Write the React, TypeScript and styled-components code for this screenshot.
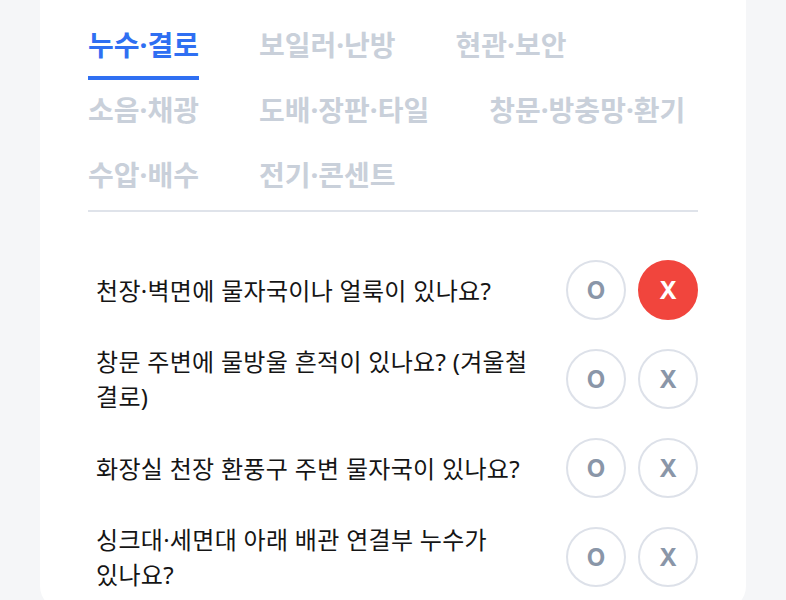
import React, { useState } from "react";
import styled, { createGlobalStyle } from "styled-components";

const Global = createGlobalStyle`
  html, body {
    margin: 0;
    padding: 0;
    background: #f5f6f8;
  }
  body {
    font-family: "Noto Sans", "Noto Sans CJK KR", sans-serif;
  }
`;

const Page = styled.div`
  padding: 0 40px;
`;

const Card = styled.section`
  background: #ffffff;
  border-radius: 0 0 24px 24px;
  padding: 15px 48px 6px;
`;

const Tabs = styled.nav`
  display: flex;
  flex-wrap: wrap;
  column-gap: 60px;
  border-bottom: 2px solid #dfe3ea;
`;

const Tab = styled.button<{ $active?: boolean }>`
  appearance: none;
  background: none;
  border: 0;
  border-bottom: 4px solid ${(p) => (p.$active ? "#2f6ff2" : "transparent")};
  padding: 12px 0 13px;
  margin: 0;
  font-family: "Noto Sans", "Noto Sans CJK KR", sans-serif;
  font-size: 28px;
  font-weight: 700;
  line-height: 36px;
  color: ${(p) => (p.$active ? "#2f6ff2" : "#c9d0da")};
  cursor: pointer;
`;

const List = styled.ul`
  list-style: none;
  margin: 36px 0 0;
  padding: 0;
`;

const Row = styled.li`
  display: flex;
  align-items: center;
  gap: 24px;
  padding: 12px 0 12px 8px;
`;

const Question = styled.p`
  flex: 1;
  margin: 0;
  font-family: "Noto Sans", "Noto Sans CJK KR", sans-serif;
  font-size: 24px;
  letter-spacing: 0.3px;
  line-height: 35px;
  word-break: keep-all;
  color: #151515;
`;

const Choices = styled.div`
  display: flex;
  gap: 12px;
  flex-shrink: 0;
`;

const Choice = styled.button<{ $on?: boolean }>`
  appearance: none;
  width: 60px;
  height: 60px;
  border-radius: 50%;
  box-sizing: border-box;
  border: 2px solid ${(p) => (p.$on ? "#f1453d" : "#dde1e9")};
  background: ${(p) => (p.$on ? "#f1453d" : "#ffffff")};
  color: ${(p) => (p.$on ? "#ffffff" : "#8a96a8")};
  font-family: "Inter", "Noto Sans", sans-serif;
  font-size: 24px;
  font-weight: 700;
  display: flex;
  align-items: center;
  justify-content: center;
  padding: 0;
  cursor: pointer;
`;

const tabs = [
  "누수·결로",
  "보일러·난방",
  "현관·보안",
  "소음·채광",
  "도배·장판·타일",
  "창문·방충망·환기",
  "수압·배수",
  "전기·콘센트",
];

const questions = [
  "천장·벽면에 물자국이나 얼룩이 있나요?",
  "창문 주변에 물방울 흔적이 있나요? (겨울철 결로)",
  "화장실 천장 환풍구 주변 물자국이 있나요?",
  "싱크대·세면대 아래 배관 연결부 누수가 있나요?",
];

export default function App() {
  const [active, setActive] = useState(0);
  const [answers, setAnswers] = useState<Record<number, "O" | "X">>({ 0: "X" });

  return (
    <Page>
      <Global />
      <Card>
        <Tabs>
          {tabs.map((t, i) => (
            <Tab key={t} $active={i === active} onClick={() => setActive(i)}>
              {t}
            </Tab>
          ))}
        </Tabs>
        <List>
          {questions.map((q, i) => (
            <Row key={q}>
              <Question>{q}</Question>
              <Choices>
                {(["O", "X"] as const).map((c) => (
                  <Choice
                    key={c}
                    $on={answers[i] === c}
                    onClick={() => setAnswers({ ...answers, [i]: c })}
                  >
                    {c}
                  </Choice>
                ))}
              </Choices>
            </Row>
          ))}
        </List>
      </Card>
    </Page>
  );
}
